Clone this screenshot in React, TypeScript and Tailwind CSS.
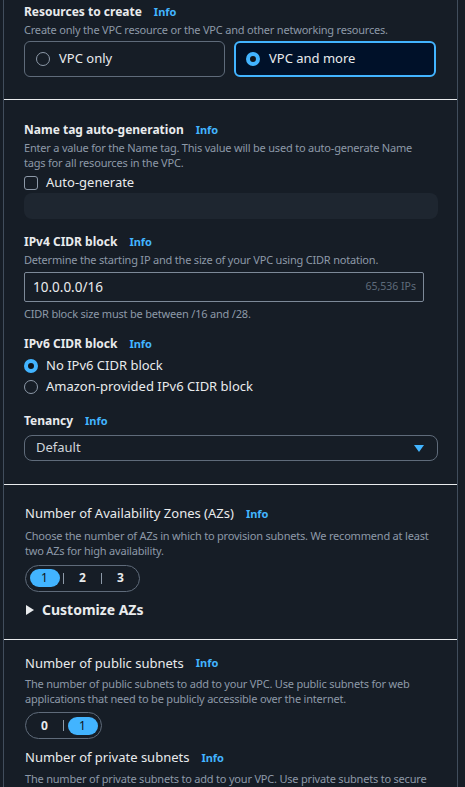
import React from "react";

const font = { fontFamily: '"Noto Sans", "Open Sans", Arial, sans-serif' };

function Info({ className = "" }: { className?: string }) {
  return <span className={`text-[11px] font-bold text-[#42b4ff] ${className}`}>Info</span>;
}

function Label({ text, bold = true }: { text: string; bold?: boolean }) {
  return (
    <div className="flex h-[16px] items-center">
      <span className={bold ? "text-[12px] font-bold text-[#e9ebed]" : "text-[13px] text-[#e9ebed]"}>{text}</span>
      <Info className="ml-3" />
    </div>
  );
}

function Desc({ children, className = "" }: { children: React.ReactNode; className?: string }) {
  return <p className={`text-[11px] leading-[15px] tracking-[-0.2px] text-[#8d99a8] ${className}`}>{children}</p>;
}

function Radio({ checked }: { checked: boolean }) {
  return checked ? (
    <span className="h-[14px] w-[14px] rounded-full border-[4px] border-[#42b4ff] bg-[#0f141a] shrink-0" />
  ) : (
    <span className="h-[14px] w-[14px] rounded-full border border-[#8d99a8] shrink-0" />
  );
}

function Segmented({ items, selected }: { items: string[]; selected: number }) {
  return (
    <div className="inline-flex h-[27px] items-center rounded-full border border-[#5f6b7a]">
      {items.map((it, i) => (
        <React.Fragment key={it}>
          {i > 0 && <span className="h-[11px] w-px bg-[#8d99a8]" />}
          <span className="flex w-[37px] items-center justify-center">
            {i === selected ? (
              <span className="flex h-[18px] w-[30px] items-center justify-center rounded-full bg-[#42b4ff] text-[12px] text-[#0f141a]">
                {it}
              </span>
            ) : (
              <span className="text-[12px] font-bold text-[#e9ebed]">{it}</span>
            )}
          </span>
        </React.Fragment>
      ))}
    </div>
  );
}

export default function App() {
  return (
    <div className="h-[787px] w-[465px] overflow-hidden bg-[#161d26]" style={font}>
      <div className="ml-[3px] w-[455px] border-x border-[#414d5c]">
        {/* Resources to create */}
        <section className="px-5 pt-[4px] pb-[22px]">
          <Label text="Resources to create" />
          <Desc className="mt-[2px]">Create only the VPC resource or the VPC and other networking resources.</Desc>
          <div className="mt-[4px] flex gap-[9px]">
            <div className="flex h-[36px] w-[201px] items-center gap-[9px] rounded-md border border-[#5f6b7a] px-[11px]">
              <Radio checked={false} />
              <span className="text-[13px] text-[#e9ebed]">VPC only</span>
            </div>
            <div className="flex h-[36px] w-[202px] items-center gap-[9px] rounded-md border-2 border-[#42b4ff] bg-[#001129] px-[10px]">
              <Radio checked />
              <span className="text-[13px] text-[#e9ebed]">VPC and more</span>
            </div>
          </div>
        </section>

        <section className="border-t border-[#e9ebed] px-5 pt-[22px] pb-[23px]">
          <Label text="Name tag auto-generation" />
          <Desc className="mt-[2px] max-w-[400px]">
            Enter a value for the Name tag. This value will be used to auto-generate Name tags for all resources in the VPC.
          </Desc>
          <label className="mt-[5px] flex h-[16px] items-center gap-[8px]">
            <span className="h-[14px] w-[14px] rounded-[3px] border border-[#8d99a8]" />
            <span className="text-[13px] text-[#e9ebed]">Auto-generate</span>
          </label>
          <div className="mt-[2px] h-[26px] w-[414px] rounded-lg bg-[#1e2630]" />

          <div className="mt-[15px]">
            <Label text="IPv4 CIDR block" />
            <Desc className="mt-[2px]">Determine the starting IP and the size of your VPC using CIDR notation.</Desc>
            <div className="mt-[5px] flex h-[30px] w-[400px] items-center justify-between rounded-[2px] border border-[#7d8998] pl-[8px] pr-[7px]">
              <span className="text-[13.5px] text-[#e9ebed]">10.0.0.0/16</span>
              <span className="text-[10.5px] text-[#5f6b7a]">65,536 IPs</span>
            </div>
            <Desc className="mt-[4px]">CIDR block size must be between /16 and /28.</Desc>
          </div>

          <div className="mt-[15px]">
            <Label text="IPv6 CIDR block" />
            <div className="mt-[6px] flex flex-col gap-[5px]">
              <div className="flex h-[16px] items-center gap-[8px]">
                <Radio checked />
                <span className="text-[13px] text-[#e9ebed]">No IPv6 CIDR block</span>
              </div>
              <div className="flex h-[16px] items-center gap-[8px]">
                <Radio checked={false} />
                <span className="text-[13px] text-[#e9ebed]">Amazon-provided IPv6 CIDR block</span>
              </div>
            </div>
          </div>

          <div className="mt-[18px]">
            <Label text="Tenancy" />
            <div className="mt-[6px] flex h-[26px] w-[414px] items-center justify-between rounded-lg border border-[#5f6b7a] pl-[11px] pr-[13px]">
              <span className="text-[13px] text-[#d1d5db]">Default</span>
              <svg width="10" height="7" viewBox="0 0 10 7">
                <path d="M0 0h10L5 7z" fill="#42b4ff" />
              </svg>
            </div>
          </div>
        </section>

        <section className="border-t border-[#e9ebed] pl-[21px] pr-5 pt-[21px] pb-[20px]">
          <Label text="Number of Availability Zones (AZs)" bold={false} />
          <Desc className="mt-[6px]">
            Choose the number of AZs in which to provision subnets. We recommend at least two AZs for high availability.
          </Desc>
          <div className="mt-[6px]">
            <Segmented items={["1", "2", "3"]} selected={0} />
          </div>
          <div className="mt-[9px] ml-[1px] flex h-[18px] items-center gap-[8px]">
            <svg width="8" height="10" viewBox="0 0 8 10">
              <path d="M0 0l8 5-8 5z" fill="#e9ebed" />
            </svg>
            <span className="text-[14px] font-bold text-[#e9ebed]">Customize AZs</span>
          </div>
        </section>

        <section className="border-t border-[#e9ebed] pl-[21px] pr-5 pt-[16px]">
          <Label text="Number of public subnets" bold={false} />
          <Desc className="mt-[4px]">
            The number of public subnets to add to your VPC. Use public subnets for web applications that need to be publicly accessible over the internet.
          </Desc>
          <div className="mt-[6px]">
            <Segmented items={["0", "1"]} selected={1} />
          </div>
          <div className="mt-[11px]">
            <Label text="Number of private subnets" bold={false} />
            <Desc className="mt-[5px]">
              The number of private subnets to add to your VPC. Use private subnets to secure backend resources that don't need public access.
            </Desc>
          </div>
        </section>
      </div>
    </div>
  );
}
